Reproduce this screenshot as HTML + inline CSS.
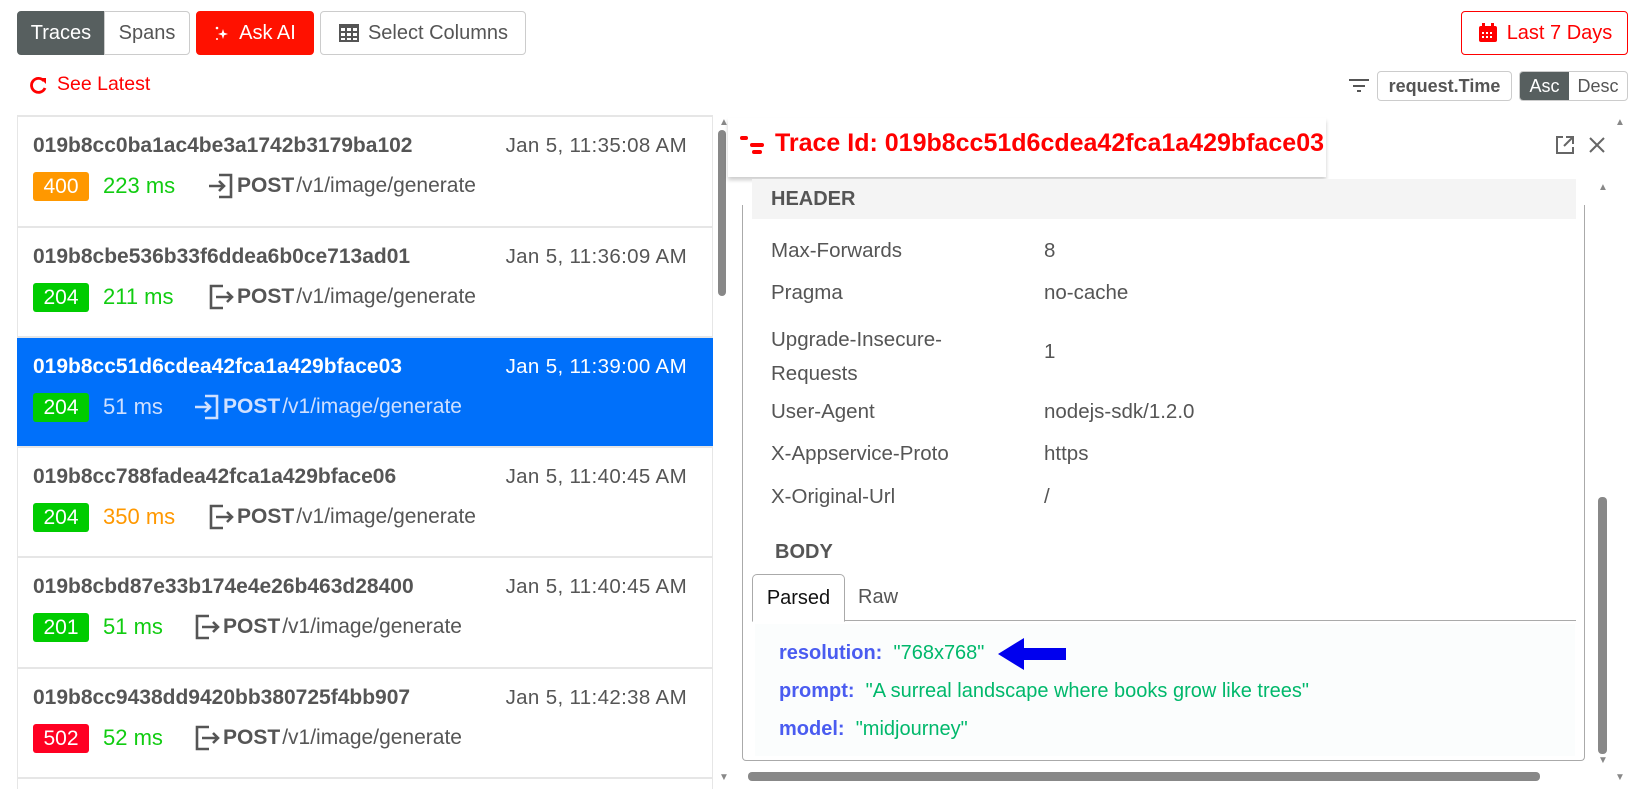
<!DOCTYPE html>
<html><head><meta charset="utf-8"><style>
*{box-sizing:border-box;margin:0;padding:0}
html,body{width:1633px;height:789px;overflow:hidden}
body{background:#fff;font-family:"Liberation Sans",Arial,sans-serif;color:#555;position:relative}
.a{position:absolute}
.btn{position:absolute;top:11px;height:44px;border:1px solid #ccc;border-radius:4px;font-size:20px;display:flex;align-items:center;justify-content:center;color:#555}
.row{position:absolute;left:17px;width:696px;height:110px;border-top:2px solid #e6e6e6;}
.id{position:absolute;left:16px;top:17px;font-weight:bold;font-size:21px;color:#555}
.tm{position:absolute;right:26px;top:17px;font-size:20.5px;color:#555;letter-spacing:.35px}
.bd{position:absolute;left:16px;top:55px;width:56px;height:29px;border-radius:3px;color:#fff;font-size:21px;text-align:center;line-height:29px}
.ms{position:absolute;top:56px;font-size:22px}
.ep{position:absolute;top:55px;font-size:21px;display:flex;align-items:center;gap:2px}
.ep b{font-weight:bold}
.k{position:absolute;left:771px;font-size:20.5px;color:#555}
.v{position:absolute;left:1044px;font-size:20.5px;color:#555}
.jk{color:#4a5cf0;font-weight:bold}
.js{color:#00b86b}
</style></head><body>
<svg width="0" height="0" style="position:absolute"><defs>
<symbol id="in" viewBox="0 0 28 28"><path d="M12 3h12v22H12" fill="none" stroke="currentColor" stroke-width="2.6"/><path d="M2 14h15M12 9l5 5-5 5" fill="none" stroke="currentColor" stroke-width="2.6"/></symbol>
<symbol id="out" viewBox="0 0 28 28"><path d="M16 3H4v22h12" fill="none" stroke="currentColor" stroke-width="2.6"/><path d="M9 14h16M20 9l5 5-5 5" fill="none" stroke="currentColor" stroke-width="2.6"/></symbol>
</defs></svg>
<div class="btn" style="left:17px;width:88px;background:#575f5f;color:#fff;border-color:#575f5f;border-radius:4px 0 0 4px">Traces</div>
<div class="btn" style="left:104px;width:86px;border-radius:0 4px 4px 0">Spans</div>
<div class="btn" style="left:196px;width:118px;background:#ff1100;border-color:#ff1100;color:#fff"><svg width="16" height="16" viewBox="0 0 16 16" style="margin-right:9px"><path d="M9 4l1.2 3.8L14 9l-3.8 1.2L9 14l-1.2-3.8L4 9l3.8-1.2z" fill="#fff"/><circle cx="3" cy="3" r="1.3" fill="#fff"/><circle cx="3" cy="14" r="1" fill="#fff"/></svg>Ask AI</div>
<div class="btn" style="left:320px;width:206px"><svg width="22" height="20" viewBox="0 0 22 20" style="margin-right:8px"><rect x="1" y="1" width="20" height="18" fill="#555"/><g fill="#fff"><rect x="3" y="5" width="4" height="3"/><rect x="9" y="5" width="4" height="3"/><rect x="15" y="5" width="4" height="3"/><rect x="3" y="10" width="4" height="3"/><rect x="9" y="10" width="4" height="3"/><rect x="15" y="10" width="4" height="3"/><rect x="3" y="15" width="4" height="2"/><rect x="9" y="15" width="4" height="2"/><rect x="15" y="15" width="4" height="2"/></g></svg>Select Columns</div>
<div class="btn" style="left:1461px;width:167px;border-color:#f00;color:#f00"><svg width="22" height="22" viewBox="0 0 22 22" style="margin-right:8px"><rect x="2" y="4" width="18" height="16" rx="2" fill="#f00"/><rect x="5" y="1" width="3" height="5" fill="#f00"/><rect x="14" y="1" width="3" height="5" fill="#f00"/><g fill="#fff"><rect x="5" y="10" width="2" height="2"/><rect x="9" y="10" width="2" height="2"/><rect x="13" y="10" width="2" height="2"/><rect x="5" y="14" width="2" height="2"/><rect x="9" y="14" width="2" height="2"/><rect x="13" y="14" width="2" height="2"/></g></svg>Last 7 Days</div>
<svg class="a" style="left:30px;top:76px" width="18" height="18" viewBox="0 0 18 18"><path d="M14 5A7 7 0 1 0 15 12" fill="none" stroke="#f00" stroke-width="2.8"/><path d="M10 2h6v6z" fill="#f00"/></svg>
<div class="a" style="left:57px;top:73px;font-size:19.5px;color:#f00">See Latest</div>
<svg class="a" style="left:1349px;top:77px" width="20" height="16"><g fill="#555"><rect x="0" y="2" width="20" height="2"/><rect x="4" y="8" width="12" height="2"/><rect x="8" y="13" width="4" height="2"/></g></svg>
<div class="a" style="left:1377px;top:71px;width:135px;height:30px;border:1px solid #ccc;border-radius:4px;font-size:18px;font-weight:bold;color:#555;text-align:center;line-height:28px">request.Time</div>
<div class="a" style="left:1519px;top:71px;width:109px;height:30px;border:1px solid #ccc;border-radius:4px;font-size:18px;display:flex;overflow:hidden"><span style="width:49px;background:#575f5f;color:#fff;text-align:center;line-height:28px">Asc</span><span style="flex:1;text-align:center;line-height:28px">Desc</span></div>

<div class="a" style="left:17px;top:115px;width:696px;height:674px;border-left:1px solid #e6e6e6;border-right:1px solid #e6e6e6"></div>
<div class="row" style="top:115px"><div class="id">019b8cc0ba1ac4be3a1742b3179ba102</div><div class="tm">Jan 5, 11:35:08 AM</div><div class="bd" style="background:#ff9800">400</div><div class="ms" style="left:86px;color:#11cc11">223 ms</div><div class="ep" style="left:190px"><svg width="28" height="28"><use href="#in"/></svg><b>POST</b> /v1/image/generate</div></div>
<div class="row" style="top:226px"><div class="id">019b8cbe536b33f6ddea6b0ce713ad01</div><div class="tm">Jan 5, 11:36:09 AM</div><div class="bd" style="background:#00cc00">204</div><div class="ms" style="left:86px;color:#11cc11">211 ms</div><div class="ep" style="left:190px"><svg width="28" height="28"><use href="#out"/></svg><b>POST</b> /v1/image/generate</div></div>
<div class="row" style="top:336px;background:#0070fa;border-top-color:#e6e6e6"><div class="id" style="color:#fff">019b8cc51d6cdea42fca1a429bface03</div><div class="tm" style="color:#fff">Jan 5, 11:39:00 AM</div><div class="bd" style="background:#00cc00">204</div><div class="ms" style="left:86px;color:#cfe0ff">51 ms</div><div class="ep" style="left:176px;color:#cfe0ff"><svg width="28" height="28"><use href="#in"/></svg><b>POST</b> /v1/image/generate</div></div>
<div class="row" style="top:446px"><div class="id">019b8cc788fadea42fca1a429bface06</div><div class="tm">Jan 5, 11:40:45 AM</div><div class="bd" style="background:#00cc00">204</div><div class="ms" style="left:86px;color:#ff9800">350 ms</div><div class="ep" style="left:190px"><svg width="28" height="28"><use href="#out"/></svg><b>POST</b> /v1/image/generate</div></div>
<div class="row" style="top:556px"><div class="id">019b8cbd87e33b174e4e26b463d28400</div><div class="tm">Jan 5, 11:40:45 AM</div><div class="bd" style="background:#00cc00">201</div><div class="ms" style="left:86px;color:#11cc11">51 ms</div><div class="ep" style="left:176px"><svg width="28" height="28"><use href="#out"/></svg><b>POST</b> /v1/image/generate</div></div>
<div class="row" style="top:667px"><div class="id">019b8cc9438dd9420bb380725f4bb907</div><div class="tm">Jan 5, 11:42:38 AM</div><div class="bd" style="background:#ff0022">502</div><div class="ms" style="left:86px;color:#11cc11">52 ms</div><div class="ep" style="left:176px"><svg width="28" height="28"><use href="#out"/></svg><b>POST</b> /v1/image/generate</div></div>
<div class="row" style="top:777px;height:12px"></div>
<div class="a" style="left:718px;top:130px;width:8px;height:166px;background:#888;border-radius:4px"></div>

<div class="a" style="left:728px;top:118px;width:598px;height:59px;background:#fff;box-shadow:0 3px 4px rgba(0,0,0,.2)"></div>
<svg class="a" style="left:740px;top:136px" width="30" height="20"><g fill="#f00"><rect x="0" y="0" width="8" height="4" rx="2"/><rect x="10" y="7" width="14" height="4" rx="2"/><rect x="12" y="14" width="10" height="4" rx="2"/></g></svg>
<div class="a" style="left:775px;top:129px;font-size:25px;font-weight:bold;color:#f00">Trace Id: 019b8cc51d6cdea42fca1a429bface03</div>
<svg class="a" style="left:1555px;top:135px" width="20" height="20"><path d="M8 2H2v16h16v-6" fill="none" stroke="#666" stroke-width="2"/><path d="M11 2h7v7M18 2l-9 9" fill="none" stroke="#666" stroke-width="2"/></svg>
<svg class="a" style="left:1588px;top:136px" width="18" height="18"><path d="M2 2l14 14M16 2L2 16" stroke="#666" stroke-width="2"/></svg>

<div class="a" style="left:742px;top:205px;width:843px;height:556px;border:1px solid #aaa;border-top:none;border-radius:0 0 4px 4px"></div>
<div class="a" style="left:752px;top:179px;width:824px;height:40px;background:#f4f4f4;font-size:20px;font-weight:bold;color:#555;padding-left:19px;line-height:40px">HEADER</div>
<div class="k" style="top:239px">Max-Forwards</div><div class="v" style="top:239px">8</div>
<div class="k" style="top:281px">Pragma</div><div class="v" style="top:281px">no-cache</div>
<div class="k" style="top:323px;line-height:34px">Upgrade-Insecure-<br>Requests</div><div class="v" style="top:340px">1</div>
<div class="k" style="top:400px">User-Agent</div><div class="v" style="top:400px">nodejs-sdk/1.2.0</div>
<div class="k" style="top:442px">X-Appservice-Proto</div><div class="v" style="top:442px">https</div>
<div class="k" style="top:485px">X-Original-Url</div><div class="v" style="top:485px">/</div>
<div class="a" style="left:775px;top:541px;font-size:20px;font-weight:bold;color:#555">BODY</div>
<div class="a" style="left:752px;top:620px;width:824px;height:1px;background:#aaa"></div>
<div class="a" style="left:752px;top:574px;width:93px;height:48px;border:1px solid #aaa;border-bottom:1px solid #fff;border-radius:5px 5px 0 0;background:#fff;font-size:20px;color:#111;text-align:center;line-height:46px">Parsed</div>
<div class="a" style="left:858px;top:586px;font-size:20px;color:#555">Raw</div>
<div class="a" style="left:755px;top:624px;width:820px;height:132px;background:#fbfdfd"></div>
<div class="a" style="left:779px;top:642px;font-size:20px"><span class="jk">resolution:</span>&nbsp;&nbsp;<span class="js">"768x768"</span></div>
<svg class="a" style="left:998px;top:638px" width="70" height="32"><path d="M0 16L26 0v10h42v12H26v10z" fill="#0000ee"/></svg>
<div class="a" style="left:779px;top:680px;font-size:20px"><span class="jk">prompt:</span>&nbsp;&nbsp;<span class="js">"A surreal landscape where books grow like trees"</span></div>
<div class="a" style="left:779px;top:718px;font-size:20px"><span class="jk">model:</span>&nbsp;&nbsp;<span class="js">"midjourney"</span></div>
<div class="a" style="left:1598px;top:497px;width:9px;height:257px;background:#888;border-radius:4px"></div>
<div class="a" style="left:748px;top:772px;width:792px;height:9px;background:#888;border-radius:4px"></div>
<div class="a" style="left:1598px;top:182px;font-size:10px;color:#888">▲</div>
<div class="a" style="left:1615px;top:117px;font-size:10px;color:#888">▲</div>
<div class="a" style="left:1615px;top:772px;font-size:10px;color:#888">▼</div>
<div class="a" style="left:1598px;top:755px;font-size:10px;color:#888">▼</div>
<div class="a" style="left:719px;top:772px;font-size:10px;color:#888">▼</div>
<div class="a" style="left:719px;top:117px;font-size:10px;color:#888">▲</div>
</body></html>
